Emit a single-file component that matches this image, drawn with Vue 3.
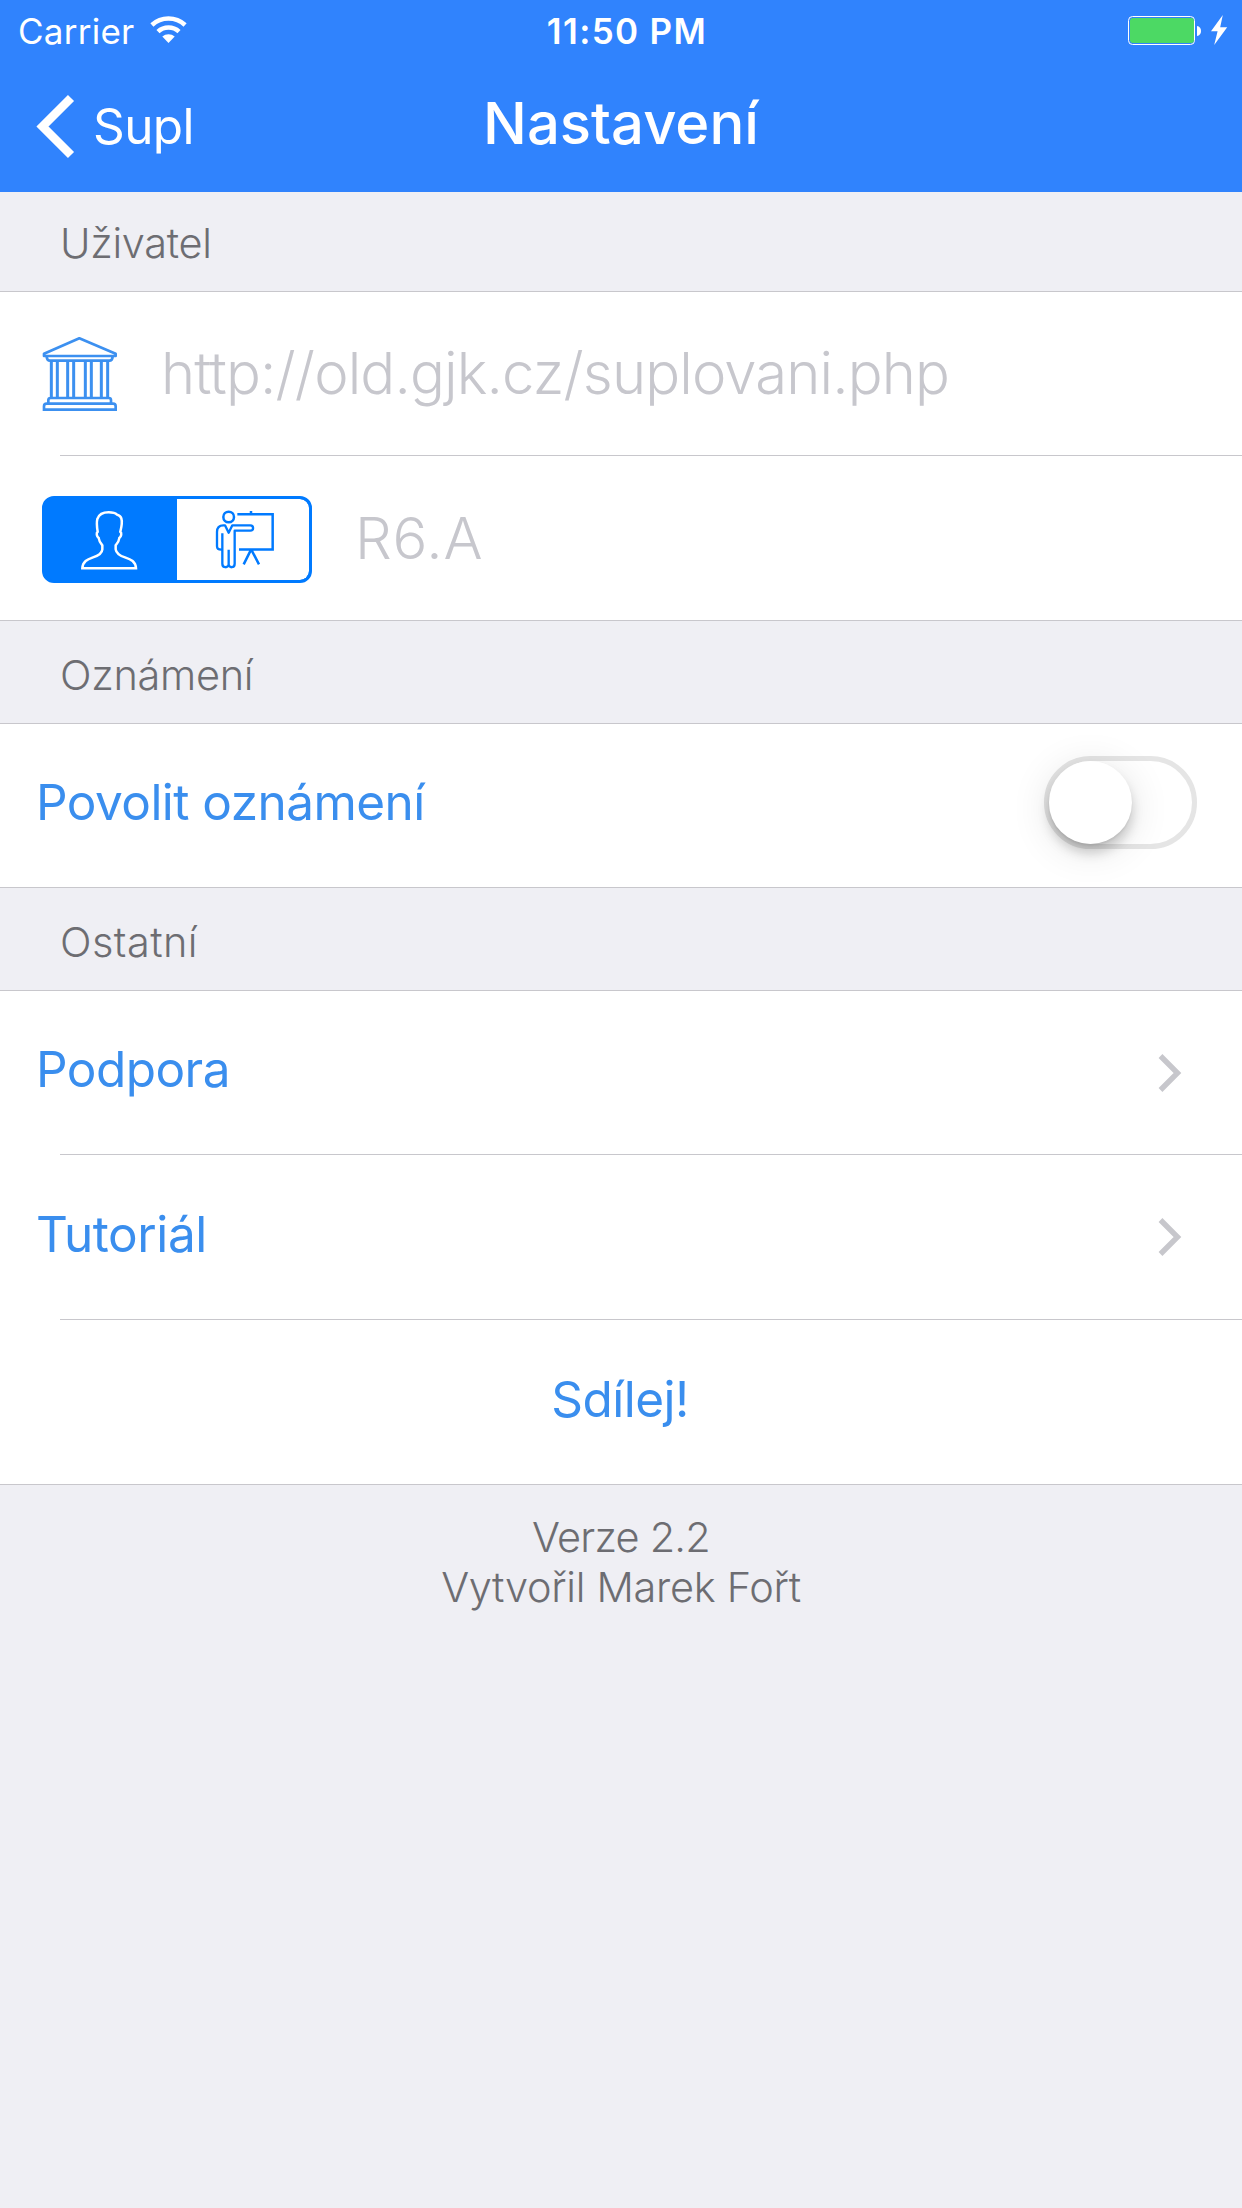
<script setup>
import { ref } from 'vue'

const role = ref('student')
const notifications = ref(false)
</script>

<template>
  <div class="screen">
    <header class="top">
      <div class="status">
        <div class="status-side">
          <span class="carrier">Carrier</span>
          <svg class="wifi" viewBox="149 15 39 29" width="39" height="29" aria-hidden="true">
            <g fill="none" stroke="#fff" stroke-width="4.6">
              <path d="M151.9 25A24.6 24.6 0 0 1 185.1 25" />
              <path d="M158 31.6A15.6 15.6 0 0 1 179 31.6" />
            </g>
            <path d="M168.5 43L162.3 36.6A9.2 9.2 0 0 1 174.7 36.6Z" fill="#fff" />
          </svg>
        </div>
        <span class="time">11:50 PM</span>
        <div class="status-side right">
          <svg viewBox="1128 14 100 33" width="100" height="33" aria-hidden="true">
            <rect x="1128.5" y="16.5" width="66" height="28" rx="4" fill="none" stroke="#fff" />
            <rect x="1130" y="18" width="64" height="25" rx="3" fill="#4cd964" />
            <path d="M1197 26C1202.4 26.6 1202.4 35.4 1197 36Z" fill="#fff" />
            <path d="M1222.8 15L1211 31.2H1217.6L1214.2 45L1227.2 27.3H1220.2Z" fill="#fff" />
          </svg>
        </div>
      </div>
      <nav class="nav">
        <a class="back">
          <svg viewBox="36 94 40 65" width="40" height="65" aria-hidden="true">
            <path d="M72 98L43.5 126.5L72 155" fill="none" stroke="#fff" stroke-width="8.6" />
          </svg>
          <span>Supl</span>
        </a>
        <h1>Nastavení</h1>
      </nav>
    </header>

    <section>
      <h2 class="head first">Uživatel</h2>
      <div class="group">
        <div class="row">
          <svg class="bank" viewBox="36 48 228 228" width="76" height="76" aria-hidden="true">
            <g fill="none" stroke="#3c90f0" stroke-width="8" stroke-linejoin="round">
              <path d="M42 101L148 55L257 101V108H42Z" />
              <path d="M50 110Q51 122 60 122H238Q247 122 248 110" />
              <path d="M64 122V232M82 122V232M113 122V232M131 122V232M166 122V232M184 122V232M214 122V232M233 122V232" stroke-width="9" />
              <path d="M55 250V240Q55 234 62 234H236Q243 234 243 240V250" />
              <path d="M42 269V259Q42 251 50 251H249Q257 251 257 259V269Z" stroke-linejoin="miter" />
            </g>
          </svg>
          <span class="placeholder url">http://old.gjk.cz/suplovani.php</span>
        </div>
        <div class="row inset roles">
          <div class="segmented">
            <button class="seg" :class="{ on: role === 'student' }" @click="role = 'student'">
              <svg viewBox="45 57 396 243" width="132" height="81">
                <path fill="none" stroke="currentColor" stroke-width="7.5" d="M236 97C222 97 207 103 202 117C199 129 201 143 203 155C198 159 200 169 206 174C207 184 212 190 217 196V208C216 221 205 227 189 232C172 238 158 244 157 265H318C317 244 303 238 285 232C269 227 259 221 257 208V196C263 190 267 184 268 174C274 169 276 159 271 155C274 143 278 128 274 115C272 108 267 106 261 104C255 98 246 97 236 97Z" />
              </svg>
            </button>
            <button class="seg" :class="{ on: role === 'teacher' }" @click="role = 'teacher'">
              <svg viewBox="441 57 396 243" width="132" height="81">
                <g fill="none" stroke="currentColor" stroke-width="7.5">
                  <circle cx="596" cy="111" r="16" />
                  <path d="M622 103H728V208.5H627M663 93V103M662 211L641 253M665 211L687 253" />
                  <path stroke-width="7" stroke-linejoin="round" d="M574 209C564 209 561 205 561 199V156C561 143 567 136 580 136H585L596 158L607 136H661C672 136 672 152 661 152H614V251C614 265 596 265 596 252V209M577 160V251C577 265 596 265 596 252" />
                </g>
              </svg>
            </button>
          </div>
          <span class="placeholder class-name">R6.A</span>
        </div>
      </div>
    </section>

    <section>
      <h2 class="head">Oznámení</h2>
      <div class="group">
        <div class="row link">
          <span class="label">Povolit oznámení</span>
          <button class="switch" :class="{ on: notifications }" @click="notifications = !notifications">
            <span class="knob"></span>
          </button>
        </div>
      </div>
    </section>

    <section>
      <h2 class="head other">Ostatní</h2>
      <div class="group">
        <div class="row link">
          <span class="label">Podpora</span>
          <svg class="chevron" viewBox="0 0 26 42" width="26" height="42"><path d="M3.5 4L20.5 21L3.5 38" /></svg>
        </div>
        <div class="row link inset">
          <span class="label tutorial">Tutoriál</span>
          <svg class="chevron" viewBox="0 0 26 42" width="26" height="42"><path d="M3.5 4L20.5 21L3.5 38" /></svg>
        </div>
        <div class="row link inset share">
          <span class="label">Sdílej!</span>
        </div>
      </div>
    </section>

    <footer class="foot">
      <p class="version">Verze 2.2</p>
      <p>Vytvořil Marek Fořt</p>
    </footer>
  </div>
</template>

<style>
body {
  background: #efeff4;
}
</style>

<style scoped>
.screen {
  box-sizing: border-box;
  width: 100%;
  min-height: 2208px;
  background: #efeff4;
  font-family: Inter, 'Liberation Sans', sans-serif;
  color: #6d6d72;
}

h1,
h2,
p {
  margin: 0;
}

svg {
  display: block;
  flex: none;
}

button {
  padding: 0;
  font: inherit;
}

.top {
  height: 192px;
  background: #3083fd;
  color: #fff;
}

.status {
  display: grid;
  grid-template-columns: 1fr auto 1fr;
  align-items: center;
  height: 62px;
  font-size: 35px;
}

.status-side {
  display: flex;
  align-items: center;
  padding-left: 18px;
}

.status-side.right {
  justify-content: flex-end;
  padding: 0 14px 1px 0;
}

.carrier {
  letter-spacing: 0.25px;
}

.wifi {
  margin: 0 0 4px 15px;
}

.time {
  padding-left: 12px;
  font-weight: 600;
  letter-spacing: 1.35px;
}

.nav {
  display: grid;
  grid-template-columns: 1fr auto 1fr;
  align-items: center;
  height: 130px;
}

.back {
  display: flex;
  align-items: center;
  gap: 18px;
  padding: 0 0 2px 35px;
  font-size: 49.5px;
  line-height: 60px;
  letter-spacing: -0.6px;
}

h1 {
  padding-bottom: 8px;
  font-size: 58px;
  font-weight: 500;
  line-height: 70px;
}

.head {
  box-sizing: border-box;
  display: flex;
  align-items: center;
  height: 102px;
  padding: 6px 0 0 60px;
  font-size: 41.5px;
  font-weight: 300;
  letter-spacing: -0.3px;
}

.head.first {
  height: 99px;
  padding-top: 3px;
}

.head.other {
  letter-spacing: 0.45px;
}

.group {
  border-top: 1px solid #c8c7cc;
  border-bottom: 1px solid #c8c7cc;
  background: #fff;
}

.row {
  box-sizing: border-box;
  display: flex;
  align-items: center;
  height: 163px;
  padding-left: 42px;
}

.row.inset {
  height: 165px;
  padding-top: 1px;
  background: linear-gradient(#c8c7cc, #c8c7cc) 60px 0 / 100% 1px no-repeat;
}

.row.roles {
  padding-top: 3px;
}

.row.link {
  justify-content: space-between;
  padding-left: 36px;
  color: #3a8eee;
  font-size: 49.5px;
  letter-spacing: -0.55px;
}

.row.link.share {
  justify-content: center;
  padding: 2px 2px 0 0;
}

.label {
  padding-bottom: 7px;
}

.label.tutorial {
  letter-spacing: -0.4px;
}

.placeholder {
  color: #c7c7cd;
  font-size: 58px;
  font-weight: 300;
}

.url {
  margin-left: 43px;
  padding-bottom: 2px;
  letter-spacing: -0.85px;
}

.class-name {
  margin-left: 43px;
  padding-bottom: 2px;
  letter-spacing: 0.8px;
}

.segmented {
  box-sizing: border-box;
  display: flex;
  width: 270px;
  height: 87px;
  overflow: hidden;
  border: 3px solid #007aff;
  border-radius: 12px;
  background: #007aff;
}

.seg {
  flex: 1;
  border: 0;
  background: #fff;
  color: #007aff;
}

.seg:last-child {
  border-radius: 0 9px 9px 0;
}

.seg.on {
  background: #007aff;
  color: #fff;
}

.switch {
  box-sizing: border-box;
  display: flex;
  width: 153px;
  height: 93px;
  margin: 0 45px 6px 0;
  border: 5px solid #e5e5e5;
  border-radius: 47px;
  background: #fff;
}

.switch.on {
  justify-content: flex-end;
  border-color: #4cd964;
  background: #4cd964;
}

.knob {
  width: 83px;
  height: 83px;
  border-radius: 50%;
  background: #fff;
  box-shadow:
    0 9px 12px rgba(0, 0, 0, 0.18),
    0 2px 2px rgba(0, 0, 0, 0.06),
    0 6px 40px rgba(0, 0, 0, 0.12);
}

.chevron {
  margin-right: 59px;
  fill: none;
  stroke: #c7c7cc;
  stroke-width: 5.4;
}

.foot {
  padding-top: 27px;
  text-align: center;
  font-size: 41.5px;
  font-weight: 300;
  line-height: 50px;
  letter-spacing: -0.3px;
}

.version {
  letter-spacing: -0.8px;
}
</style>
